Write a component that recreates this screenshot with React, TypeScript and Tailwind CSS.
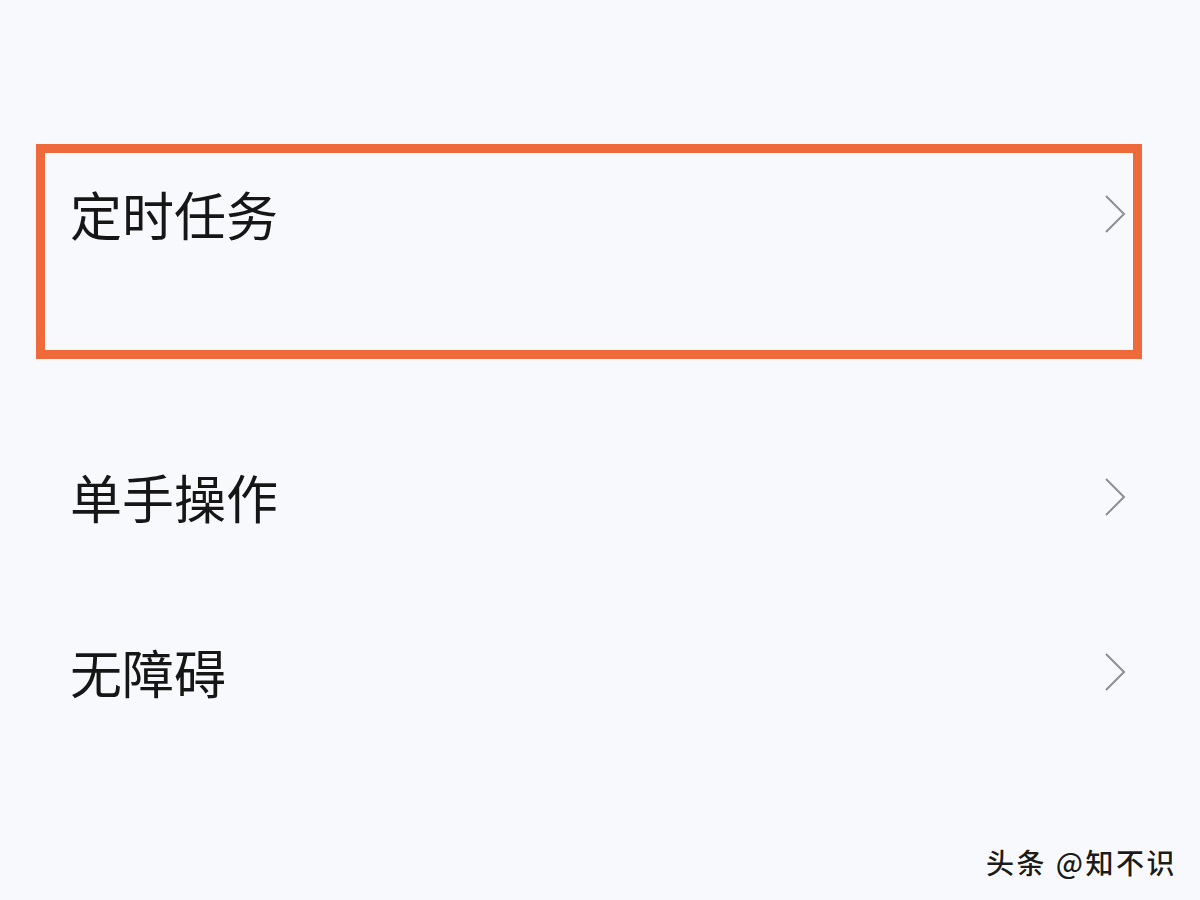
const Chevron = () => (
  <svg width="22" height="40" viewBox="0 0 22 40" fill="none">
    <polyline points="2,2 20,20 2,38" stroke="#8e8e93" strokeWidth="2" strokeLinejoin="miter" />
  </svg>
);

const font = { fontFamily: '"Noto Sans CJK SC", "Noto Sans", sans-serif' };

export default function App() {
  return (
    <div className="w-[1200px] h-[900px] bg-[#f8f9fd] flex flex-col pt-[144px] overflow-hidden" style={font}>
      <div className="ml-[36px] mr-[58px] h-[215px] border-[9px] border-[#ef6a3a]">
        <div className="h-[122px] flex items-center justify-between pl-[25px] pr-[7px]">
          <span className="text-[52px] leading-none text-[#161616]">定时任务</span>
          <Chevron />
        </div>
      </div>

      <div className="mt-[78px] h-[120px] flex items-center justify-between pl-[70px] pr-[74px]">
        <span className="text-[52px] leading-none text-[#161616]">单手操作</span>
        <Chevron />
      </div>

      <div className="mt-[55px] h-[120px] flex items-center justify-between pl-[70px] pr-[74px]">
        <span className="text-[52px] leading-none text-[#161616]">无障碍</span>
        <Chevron />
      </div>

      <div className="mt-auto flex justify-end pr-[23px] pb-[24px]">
        <span
          className="text-[28px] leading-none tracking-[2.5px] font-medium text-[#1c1c1c]"
          style={{ textShadow: "1px 1px 0 #fff, -1px -1px 0 #fff, 1px -1px 0 #fff, -1px 1px 0 #fff" }}
        >
          头条 @知不识
        </span>
      </div>
    </div>
  );
}
